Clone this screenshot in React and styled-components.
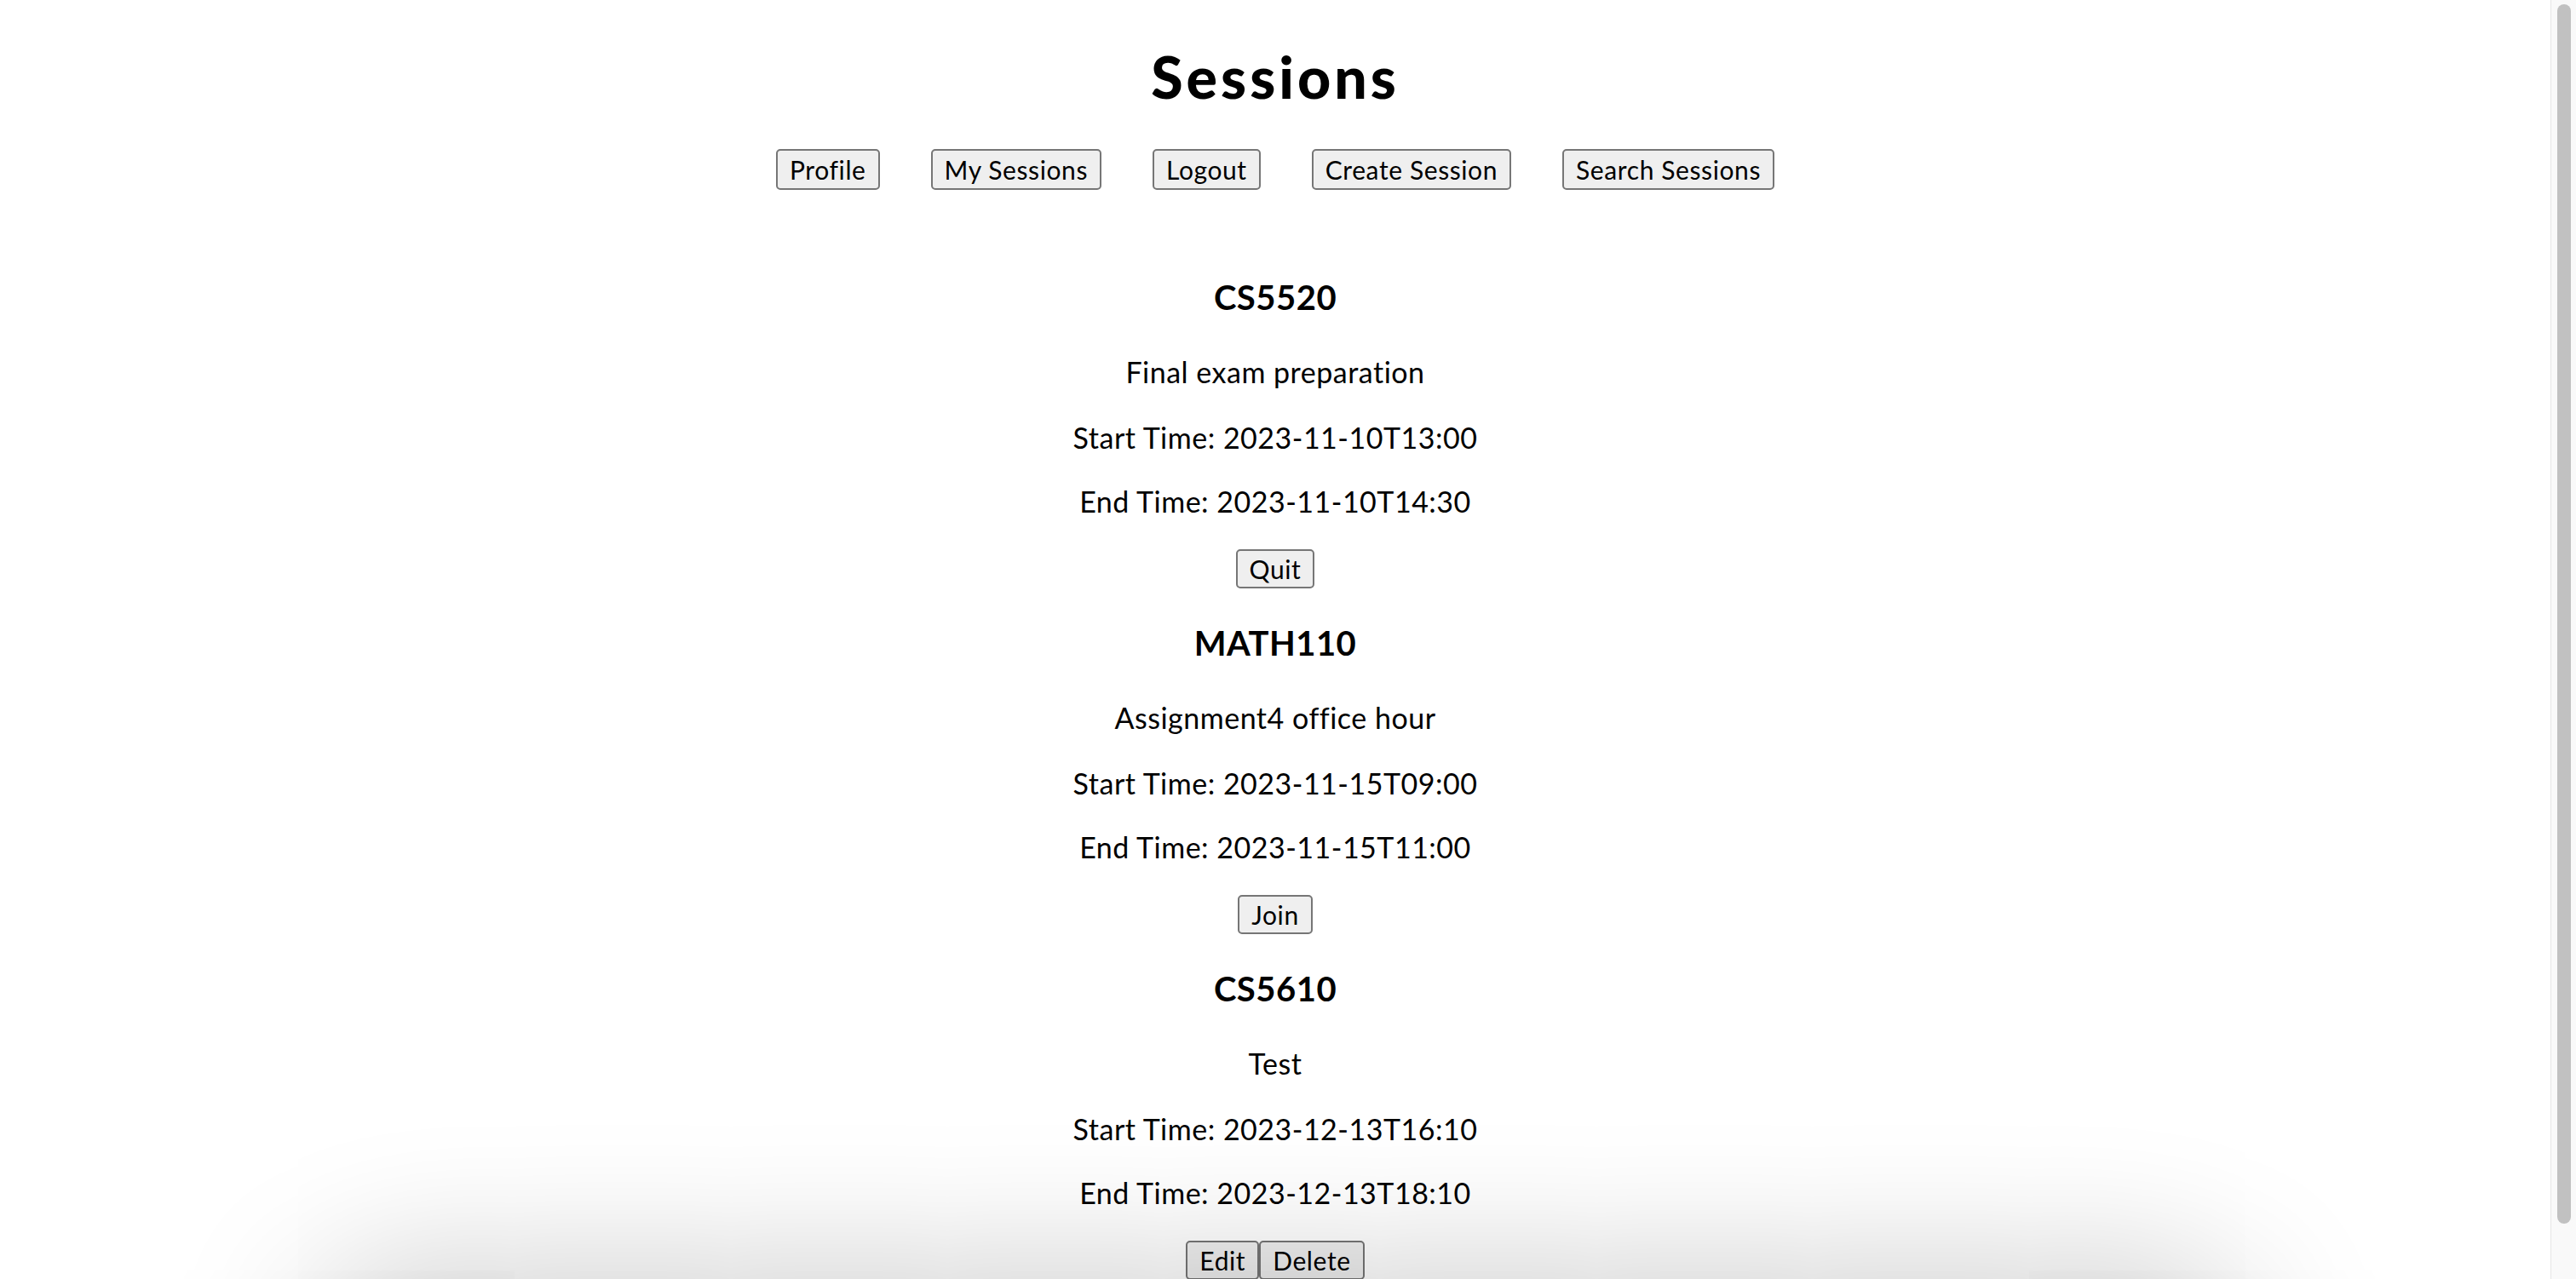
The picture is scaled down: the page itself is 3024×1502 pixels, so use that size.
import React from "react";
import styled, { createGlobalStyle } from "styled-components";

const Global = createGlobalStyle`
  html {
    background: #ffffff;
    overflow: hidden;
  }
  body {
    margin: 16px;
    font-family: Lato, "Liberation Sans", sans-serif;
    color: #000;
    background: #fff;
  }
`;

const Page = styled.div`
  display: flex;
  flex-direction: column;
  align-items: center;
  padding-right: 30px;
  padding-bottom: 48px;
`;

const Title = styled.h1`
  margin: 35px 0 0;
  font-size: 68px;
  line-height: 77px;
  font-weight: 900;
  letter-spacing: 4px;
`;

const Nav = styled.nav`
  display: flex;
  justify-content: center;
  gap: 60px;
  margin-top: 47px;
`;

const Button = styled.button`
  font-family: Lato, "Liberation Sans", sans-serif;
  font-size: 30px;
  line-height: 36px;
  letter-spacing: 0.6px;
  padding: ${(p) => (p.$small ? "3px 14px" : "4px 14px")};
  color: #000;
  background: #efefef;
  border: 2px solid #767676;
  border-radius: 5px;
  cursor: pointer;
`;

const List = styled.div`
  display: flex;
  flex-direction: column;
  align-items: center;
  margin-top: 103px;
  gap: 41px;
`;

const Session = styled.section`
  display: flex;
  flex-direction: column;
  align-items: center;
`;

const Course = styled.h3`
  margin: 0;
  font-size: 40px;
  line-height: 47px;
  font-weight: 700;
  letter-spacing: 0.5px;
`;

const Line = styled.p`
  margin: ${(p) => p.$gap}px 0 0;
  font-size: 34px;
  line-height: 40px;
  letter-spacing: 0.5px;
`;

const Actions = styled.div`
  display: flex;
  margin-top: 36px;
`;

const ScrollTrack = styled.div`
  position: fixed;
  top: 0;
  right: 0;
  bottom: 0;
  width: 30px;
  box-sizing: border-box;
  display: flex;
  padding: 5px 6px 65px 7px;
  background: #f9f9f9;
  border-left: 1px solid #e6e6e6;
`;

const ScrollThumb = styled.div`
  flex: 1;
  background: #c1c1c1;
  border-radius: 8px;
`;

const Shade = styled.div`
  position: fixed;
  left: 360px;
  right: 380px;
  bottom: -300px;
  height: 300px;
  border-radius: 120px;
  box-shadow: 0 0 170px 10px rgba(0, 0, 0, 0.22);
  pointer-events: none;
`;

const sessions = [
  {
    course: "CS5520",
    desc: "Final exam preparation",
    start: "2023-11-10T13:00",
    end: "2023-11-10T14:30",
    actions: ["Quit"],
  },
  {
    course: "MATH110",
    desc: "Assignment4 office hour",
    start: "2023-11-15T09:00",
    end: "2023-11-15T11:00",
    actions: ["Join"],
  },
  {
    course: "CS5610",
    desc: "Test",
    start: "2023-12-13T16:10",
    end: "2023-12-13T18:10",
    actions: ["Edit", "Delete"],
  },
];

export default function App() {
  return (
    <>
      <Global />
      <Page>
        <Title>Sessions</Title>
        <Nav>
          <Button>Profile</Button>
          <Button>My Sessions</Button>
          <Button>Logout</Button>
          <Button>Create Session</Button>
          <Button>Search Sessions</Button>
        </Nav>
        <List>
          {sessions.map((s) => (
            <Session key={s.course}>
              <Course>{s.course}</Course>
              <Line $gap={44}>{s.desc}</Line>
              <Line $gap={37}>Start Time: {s.start}</Line>
              <Line $gap={35}>End Time: {s.end}</Line>
              <Actions>
                {s.actions.map((a) => (
                  <Button key={a} $small>
                    {a}
                  </Button>
                ))}
              </Actions>
            </Session>
          ))}
        </List>
      </Page>
      <Shade />
      <ScrollTrack>
        <ScrollThumb />
      </ScrollTrack>
    </>
  );
}
